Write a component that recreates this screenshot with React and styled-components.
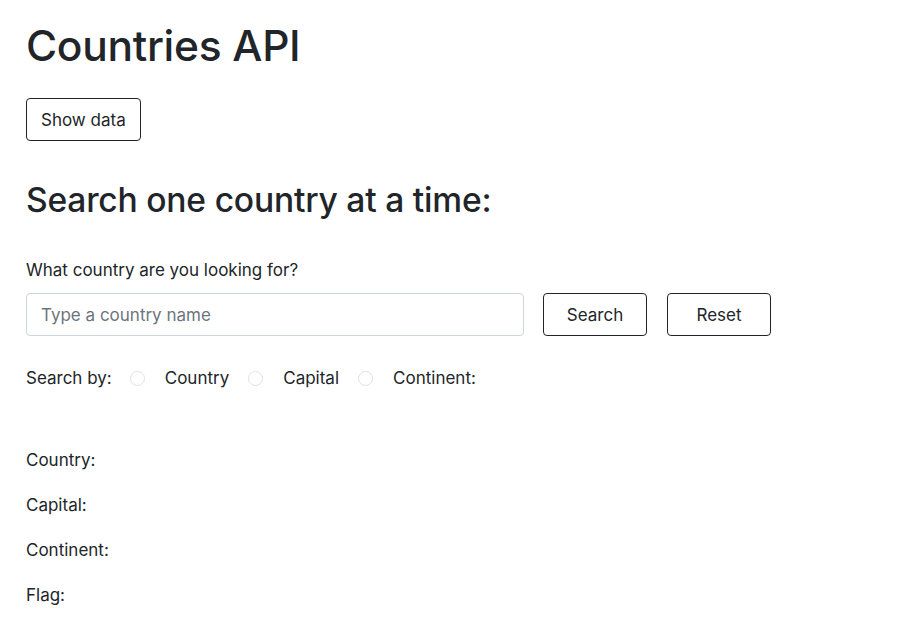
import React from 'react'
import styled, { createGlobalStyle } from 'styled-components'

const GlobalStyle = createGlobalStyle`
body {
    margin: 0;
    background: #fff;
    color: #212529;
    font-family: Inter, "Noto Sans", sans-serif;
    font-size: 17px;
}
`

const App = () => {
    return (
        <Container>
            <GlobalStyle />
            <Title>Countries API</Title>
            <OutlineButton>Show data</OutlineButton>
            <SubTitle>Search one country at a time:</SubTitle>
            <Label>What country are you looking for?</Label>
            <SearchRow>
                <Input placeholder='Type a country name' />
                <OutlineButton wide>Search</OutlineButton>
                <OutlineButton wide>Reset</OutlineButton>
            </SearchRow>
            <RadioRow>
                <span>Search by:</span>
                <Radio type='radio' name='by' />
                <span>Country</span>
                <Radio type='radio' name='by' />
                <span>Capital</span>
                <Radio type='radio' name='by' />
                <span>Continent:</span>
            </RadioRow>
            <Results>
                <Field>Country:</Field>
                <Field>Capital:</Field>
                <Field>Continent:</Field>
                <Field>Flag:</Field>
            </Results>
        </Container>
    )
}

export default App

const Container = styled.div`
padding: 20px 26px;
display: flex;
flex-direction: column;
align-items: flex-start;
`
const Title = styled.h1`
font-size: 42.5px;
font-weight: 500;
line-height: 1.2;
margin: 0 0 27px;
letter-spacing: -0.3px;
`
const OutlineButton = styled.button`
font-family: inherit;
font-size: 17px;
color: #212529;
background: #fff;
border: 1px solid #212529;
border-radius: 4px;
height: 43px;
width: ${p => (p.wide ? '104px' : 'auto')};
padding: 0 14px;
cursor: pointer;
`
const SubTitle = styled.h2`
font-size: 33.6px;
font-weight: 500;
line-height: 1.2;
margin: 39px 0 40px;
letter-spacing: -0.2px;
`
const Label = styled.label`
margin-bottom: 13px;
`
const SearchRow = styled.div`
display: flex;
gap: 19px;
& > button + button {
    margin-left: 1px;
}
`
const Input = styled.input`
font-family: inherit;
font-size: 17px;
width: 498px;
height: 43px;
box-sizing: border-box;
padding: 0 14px;
border: 1px solid #ced4da;
border-radius: 4px;
color: #212529;
&::placeholder {
    color: #6c757d;
}
`
const RadioRow = styled.div`
display: flex;
align-items: center;
margin-top: 32px;
& > span + input {
    margin-left: 19px;
}
& > span:first-child + input {
    margin-left: 18px;
}
`
const Radio = styled.input`
appearance: none;
width: 15px;
height: 15px;
margin: 0 20px 0 0;
border: 1px solid #dee2e6;
border-radius: 50%;
background: #fff;
`
const Results = styled.div`
display: flex;
flex-direction: column;
gap: 25px;
margin-top: 62px;
`
const Field = styled.div``
